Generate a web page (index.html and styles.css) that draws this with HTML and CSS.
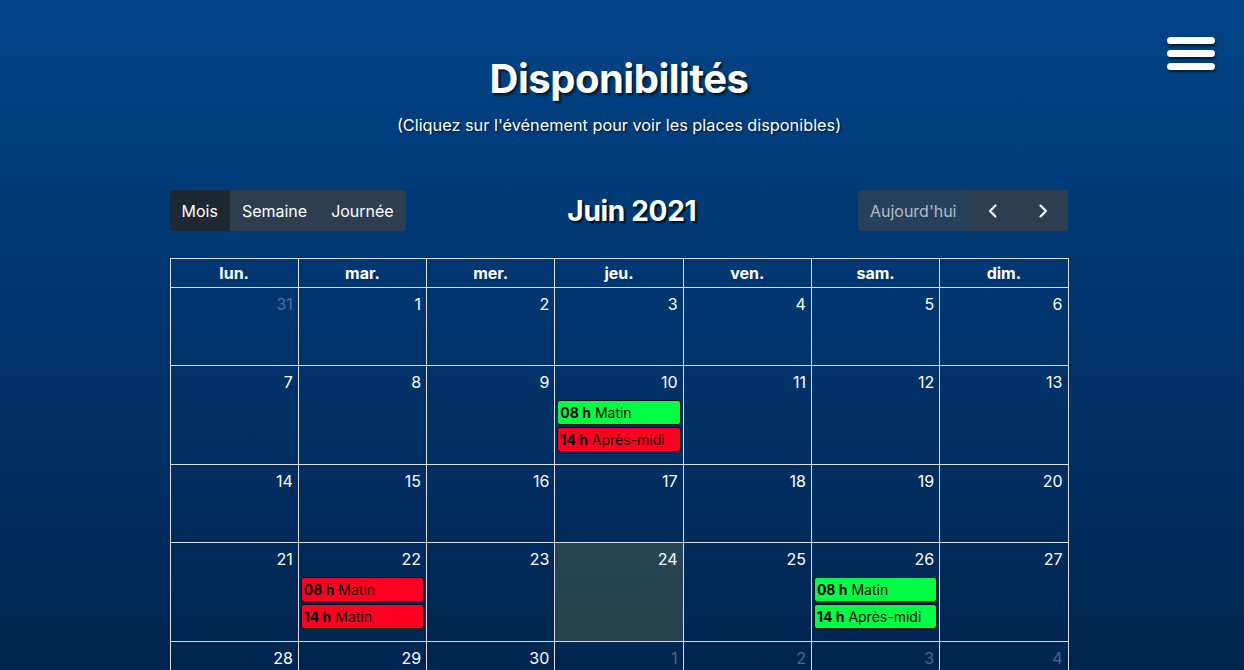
FILE: index.html
```html
<!DOCTYPE html>
<html lang="fr">
<head>
<meta charset="utf-8">
<title>Disponibilités</title>
<link rel="stylesheet" href="styles.css">
</head>
<body>
<div class="page">
  <button class="burger" aria-label="Menu"><span></span><span></span><span></span></button>
  <header class="head">
    <h1 class="title">Disponibilités</h1>
    <p class="subtitle">(Cliquez sur l'événement pour voir les places disponibles)</p>
  </header>
  <main class="cal">
    <div class="toolbar">
      <div class="btn-group">
        <button class="btn active">Mois</button>
        <button class="btn">Semaine</button>
        <button class="btn">Journée</button>
      </div>
      <h2 class="cal-title">Juin 2021</h2>
      <div class="btn-group">
        <button class="btn disabled">Aujourd'hui</button>
        <button class="btn nav"><svg viewBox="0 0 16 16" width="16" height="16"><path d="M10.5 2.5 5 8l5.5 5.5" fill="none" stroke="#fff" stroke-width="2.2" stroke-linecap="round" stroke-linejoin="round"/></svg></button>
        <button class="btn nav"><svg viewBox="0 0 16 16" width="16" height="16"><path d="M5.5 2.5 11 8l-5.5 5.5" fill="none" stroke="#fff" stroke-width="2.2" stroke-linecap="round" stroke-linejoin="round"/></svg></button>
      </div>
    </div>
    <table class="grid">
      <thead>
        <tr><th>lun.</th><th>mar.</th><th>mer.</th><th>jeu.</th><th>ven.</th><th>sam.</th><th>dim.</th></tr>
      </thead>
      <tbody>
        <tr class="wk">
          <td class="other"><div class="num">31</div></td>
          <td><div class="num">1</div></td>
          <td><div class="num">2</div></td>
          <td><div class="num">3</div></td>
          <td><div class="num">4</div></td>
          <td><div class="num">5</div></td>
          <td><div class="num">6</div></td>
        </tr>
        <tr class="wk">
          <td><div class="num">7</div></td>
          <td><div class="num">8</div></td>
          <td><div class="num">9</div></td>
          <td><div class="num">10</div>
            <div class="ev green"><b>08 h</b> Matin</div>
            <div class="ev red"><b>14 h</b> Après-midi</div>
          </td>
          <td><div class="num">11</div></td>
          <td><div class="num">12</div></td>
          <td><div class="num">13</div></td>
        </tr>
        <tr class="wk">
          <td><div class="num">14</div></td>
          <td><div class="num">15</div></td>
          <td><div class="num">16</div></td>
          <td><div class="num">17</div></td>
          <td><div class="num">18</div></td>
          <td><div class="num">19</div></td>
          <td><div class="num">20</div></td>
        </tr>
        <tr class="wk">
          <td><div class="num">21</div></td>
          <td><div class="num">22</div>
            <div class="ev red"><b>08 h</b> Matin</div>
            <div class="ev red"><b>14 h</b> Matin</div>
          </td>
          <td><div class="num">23</div></td>
          <td class="today"><div class="num">24</div></td>
          <td><div class="num">25</div></td>
          <td><div class="num">26</div>
            <div class="ev green"><b>08 h</b> Matin</div>
            <div class="ev green"><b>14 h</b> Après-midi</div>
          </td>
          <td><div class="num">27</div></td>
        </tr>
        <tr class="wk">
          <td><div class="num">28</div></td>
          <td><div class="num">29</div></td>
          <td><div class="num">30</div></td>
          <td class="other"><div class="num">1</div></td>
          <td class="other"><div class="num">2</div></td>
          <td class="other"><div class="num">3</div></td>
          <td class="other"><div class="num">4</div></td>
        </tr>
      </tbody>
    </table>
  </main>
</div>
</body>
</html>
```

FILE: styles.css
```css
html, body {
  margin: 0;
  padding: 0;
}
body {
  font-family: Inter, "Noto Sans", sans-serif;
  color: #fff;
  background: linear-gradient(180deg, #004488 0px, #002550 670px, #001a38 1000px);
  min-height: 100vh;
}
.page {
  position: relative;
  padding: 0 6px 0 0;
}
.burger {
  position: absolute;
  top: 37px;
  right: 28px;
  width: 50px;
  height: 33px;
  padding: 0;
  border: 0;
  background: none;
  display: flex;
  flex-direction: column;
  justify-content: space-between;
  align-items: center;
}
.burger span {
  display: block;
  width: 48px;
  height: 7px;
  border-radius: 4px;
  background: #fff;
  box-shadow: 1px 2px 3px rgba(0,0,0,0.6);
}
.head {
  text-align: center;
  padding-top: 53px;
}
.title {
  margin: 0;
  font-size: 40px;
  font-weight: 700;
  line-height: 52px;
  letter-spacing: -0.5px;
  text-shadow: 2px 2px 3px rgba(0,0,0,0.7);
}
.subtitle {
  margin: 8px 0 0;
  font-size: 16.3px;
  line-height: 24px;
  text-shadow: 1px 1px 2px rgba(0,0,0,0.7);
}
.cal {
  width: 899px;
  margin: 53px auto 0;
}
.toolbar {
  display: flex;
  justify-content: space-between;
  align-items: center;
  height: 41px;
  margin-bottom: 27px;
}
.btn-group {
  display: flex;
  border-radius: 4px;
  overflow: hidden;
}
.btn {
  font-family: inherit;
  font-size: 16px;
  color: #fff;
  background: #2c3e50;
  border: 0;
  height: 41px;
  padding: 0 12px;
  margin: 0;
}
.btn.active {
  background: #1e2833;
}
.btn.disabled {
  color: rgba(255,255,255,0.65);
  background: #27405c;
  padding: 0 12px;
}
.btn.nav {
  width: 50px;
  display: flex;
  align-items: center;
  justify-content: center;
}
.cal-title {
  margin: 0;
  font-size: 28px;
  font-weight: 700;
  letter-spacing: -0.3px;
  text-shadow: 2px 2px 2px rgba(0,0,0,0.75);
}
.grid {
  width: 899px;
  border-collapse: collapse;
  table-layout: fixed;
}
.grid th, .grid td {
  border: 1px solid #dddddd;
}
.grid th {
  height: 28px;
  padding: 0;
  font-size: 16px;
  font-weight: 700;
  text-align: center;
}
.grid td {
  vertical-align: top;
  padding: 0 0 10px;
  height: 67px;
}
.num {
  text-align: right;
  padding: 4px 5px 0 0;
  font-size: 16px;
  line-height: 24px;
  height: 30px;
}
.other .num {
  color: rgba(255,255,255,0.3);
}
.today {
  background: rgba(255,220,40,0.15);
}
.ev {
  margin: 0 2px 2px 2px;
  height: 23px;
  border: 1px solid #111;
  border-radius: 3px;
  color: #000;
  font-size: 14px;
  line-height: 23px;
  padding-left: 2px;
  white-space: nowrap;
  overflow: hidden;
}
.ev b {
  font-weight: 700;
}
.green {
  background: #00ff44;
}
.red {
  background: #ff0022;
}
```
